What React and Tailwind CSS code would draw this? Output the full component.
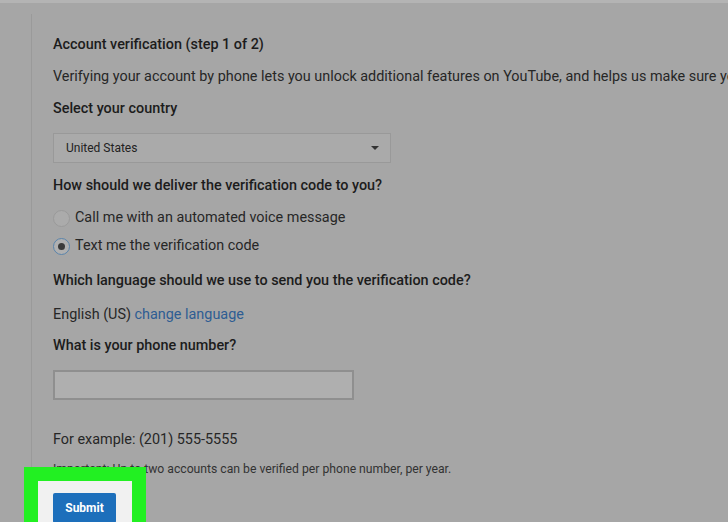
import React from "react";

function Radio({ checked }) {
  return checked ? (
    <span className="flex h-[17px] w-[17px] items-center justify-center rounded-full border border-[#5a84ab] bg-[#b0b0b0]">
      <span className="h-[7px] w-[7px] rounded-full bg-[#3a3a3a]" />
    </span>
  ) : (
    <span className="h-[17px] w-[17px] rounded-full border border-[#9a9a9a] bg-[#ababab]" />
  );
}

export default function App() {
  return (
    <div className="relative h-[522px] w-[728px] overflow-hidden bg-[#a6a6a6] font-['Roboto',sans-serif] text-[14.4px] text-[#262626]">
      <div className="h-[3px] bg-[#b4b4b4]" />
      <div className="ml-[31px] mt-[11px] h-[520px] border-l border-[#9a9a9a] pl-[21px]">
        <div className="pt-[21px] font-medium leading-[20px] text-[#1c1c1c]">
          Account verification (step 1 of 2)
        </div>
        <div className="mt-[12px] whitespace-nowrap leading-[20px]">
          Verifying your account by phone lets you unlock additional features on
          YouTube, and helps us make sure you're a real person.
        </div>
        <div className="mt-[12px] font-medium leading-[20px] text-[#1c1c1c]">
          Select your country
        </div>
        <div className="mt-[14px] flex h-[30px] w-[338px] items-center justify-between border border-[#999] bg-[#aaaaaa] pl-[12px] pr-[11px]">
          <span className="text-[12px] text-[#222]">United States</span>
          <span className="h-0 w-0 border-x-[4px] border-t-[4px] border-x-transparent border-t-[#333]" />
        </div>
        <div className="mt-[13px] font-medium leading-[20px] text-[#1c1c1c]">
          How should we deliver the verification code to you?
        </div>
        <div className="mt-[12px] flex items-center gap-[5px] leading-[20px]">
          <Radio />
          <span>Call me with an automated voice message</span>
        </div>
        <div className="mt-[8px] flex items-center gap-[5px] leading-[20px]">
          <Radio checked />
          <span>Text me the verification code</span>
        </div>
        <div className="mt-[15px] font-medium leading-[20px] text-[#1c1c1c]">
          Which language should we use to send you the verification code?
        </div>
        <div className="mt-[14px] leading-[20px]">
          English (US) <span className="text-[#2e5d93]">change language</span>
        </div>
        <div className="mt-[11px] font-medium leading-[20px] text-[#1c1c1c]">
          What is your phone number?
        </div>
        <div className="mt-[14px] h-[30px] w-[301px] border-2 border-[#8f8f8f] bg-[#afafaf]" />
        <div className="mt-[30px] leading-[20px]">For example: (201) 555-5555</div>
        <div className="mt-[9px] text-[12.2px] leading-[20px] text-[#333]">
          Important: Up to two accounts can be verified per phone number, per year.
        </div>
        <button className="relative z-10 mt-[14px] h-[30px] w-[63px] rounded-[2px] bg-[#1d6fbb] text-[12px] font-bold text-white">
          Submit
        </button>
      </div>
      <div className="absolute left-[24px] top-[467px] h-[70px] w-[122px] border-[14px] border-[#22f022] bg-[#f1f1f1]" />
    </div>
  );
}
